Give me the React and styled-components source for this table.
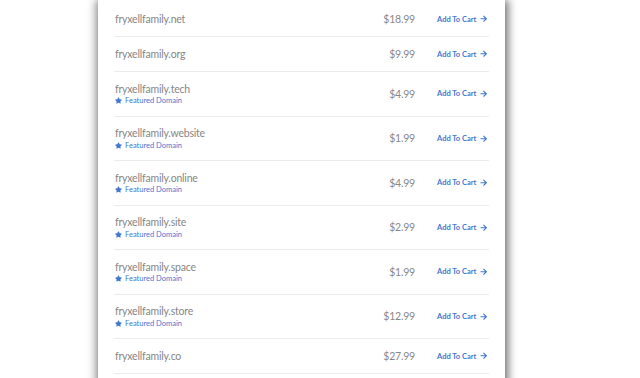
import React from 'react';
import styled, { createGlobalStyle } from 'styled-components';
import { FaStar, FaArrowRight } from 'react-icons/fa';

const GlobalStyle = createGlobalStyle`
  body {
    margin: 0;
    background: #ffffff;
    font-family: 'Lato', 'Liberation Sans', sans-serif;
  }
`;

const Page = styled.div`
  width: 640px;
  height: 378px;
  overflow: hidden;
  background: #ffffff;
`;

const Card = styled.div`
  margin-left: 98px;
  width: 407px;
  min-height: 400px;
  background: #ffffff;
  padding: 2px 16px 0;
  box-sizing: border-box;
  box-shadow: -3px 0 8px rgba(0, 0, 0, 0.35), 4px 0 8px rgba(0, 0, 0, 0.45);
`;

const Row = styled.div`
  display: flex;
  align-items: center;
  height: ${(props) => (props.featured ? '43.5px' : '34px')};
  border-bottom: 1px solid #ebebeb;
  padding-left: 1px;
`;

const Info = styled.div`
  flex: 1;
  display: flex;
  flex-direction: column;
  gap: 1.5px;
`;

const Domain = styled.div`
  font-size: 10.5px;
  color: #868686;
  letter-spacing: -0.2px;
`;

const Featured = styled.div`
  display: flex;
  align-items: center;
  gap: 3px;
  font-size: 7.5px;
  color: #3f78cf;
  svg {
    font-size: 7px;
  }
`;

const Price = styled.div`
  width: 80px;
  text-align: right;
  font-size: 10.5px;
  letter-spacing: -0.2px;
  color: #888888;
`;

const Cart = styled.div`
  margin-left: 22px;
  width: 52px;
  display: flex;
  align-items: center;
  gap: 4px;
  font-size: 7.5px;
  font-weight: 700;
  color: #3f78cf;
  svg {
    font-size: 7.5px;
  }
`;

const domains = [
  { name: 'fryxellfamily.net', price: '$18.99' },
  { name: 'fryxellfamily.org', price: '$9.99' },
  { name: 'fryxellfamily.tech', price: '$4.99', featured: true },
  { name: 'fryxellfamily.website', price: '$1.99', featured: true },
  { name: 'fryxellfamily.online', price: '$4.99', featured: true },
  { name: 'fryxellfamily.site', price: '$2.99', featured: true },
  { name: 'fryxellfamily.space', price: '$1.99', featured: true },
  { name: 'fryxellfamily.store', price: '$12.99', featured: true },
  { name: 'fryxellfamily.co', price: '$27.99' },
];

export default function App() {
  return (
    <Page>
      <GlobalStyle />
      <Card>
        {domains.map((d) => (
          <Row key={d.name} featured={d.featured}>
            <Info>
              <Domain>{d.name}</Domain>
              {d.featured && (
                <Featured>
                  <FaStar />
                  Featured Domain
                </Featured>
              )}
            </Info>
            <Price>{d.price}</Price>
            <Cart>
              Add To Cart
              <FaArrowRight />
            </Cart>
          </Row>
        ))}
      </Card>
    </Page>
  );
}
